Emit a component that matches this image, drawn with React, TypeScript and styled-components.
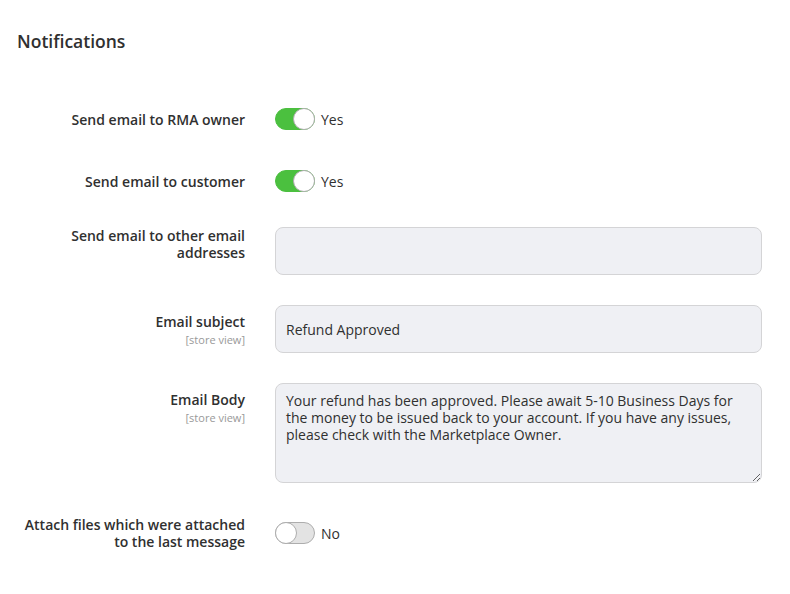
import React, {useState} from "react";
import styled, {createGlobalStyle} from "styled-components";

const GlobalStyle = createGlobalStyle`
    body {
        margin: 0;
        background: #ffffff;
        font-family: "Open Sans", "Liberation Sans", sans-serif;
        color: #303030;
    }
`;

const Wrapper = styled.main`
    width: 790px;
    padding: 30px 28px 40px 17px;
    box-sizing: border-box;
`;

const Heading = styled.h2`
    margin: 0 0 51px 0;
    font-size: 17.5px;
    line-height: 22px;
    font-weight: 600;
    color: #303030;
`;

const Fields = styled.div`
    display: flex;
    flex-direction: column;
    gap: 30px;
`;

const Row = styled.div<{ $center?: boolean; $minHeight?: number }>`
    display: flex;
    align-items: ${p => (p.$center ? "center" : "flex-start")};
    gap: 30px;
    min-height: ${p => p.$minHeight ?? 0}px;
`;

const LabelCol = styled.div<{ $top?: number }>`
    width: 228px;
    flex-shrink: 0;
    text-align: right;
    padding-top: ${p => p.$top ?? 0}px;
`;

const Label = styled.label`
    display: block;
    font-size: 14px;
    line-height: 17px;
    font-weight: 600;
    color: #303030;
`;

const Scope = styled.div`
    font-size: 11px;
    line-height: 14px;
    margin-top: 3px;
    color: #999999;
`;

const Control = styled.div`
    flex: 1;
    display: flex;
    align-items: center;
    gap: 6px;
`;

const Track = styled.button<{ $on: boolean }>`
    position: relative;
    width: 40px;
    height: 22px;
    padding: 0;
    border-radius: 11px;
    border: 1px solid ${p => (p.$on ? "#4bbf3f" : "#adadad")};
    background: ${p => (p.$on ? "#4bc03f" : "#e3e3e3")};
    cursor: pointer;
    box-sizing: border-box;
`;

const Knob = styled.span<{ $on: boolean }>`
    position: absolute;
    top: -1px;
    left: ${p => (p.$on ? "17px" : "-1px")};
    width: 22px;
    height: 22px;
    border-radius: 50%;
    background: #ffffff;
    border: 1px solid #adadad;
    box-sizing: border-box;
`;

const ToggleText = styled.span`
    font-size: 14px;
    color: #303030;
`;

const TextInput = styled.input`
    width: 100%;
    height: 48px;
    box-sizing: border-box;
    padding: 0 10px;
    border: 1px solid #d4d4d6;
    border-radius: 8px;
    background: #eff0f4;
    font-family: "Open Sans", "Liberation Sans", sans-serif;
    font-size: 14px;
    color: #303030;
    outline: none;
`;

const TextArea = styled.textarea`
    width: 100%;
    height: 100px;
    box-sizing: border-box;
    padding: 8px 10px;
    border: 1px solid #d4d4d6;
    border-radius: 8px;
    background: #eff0f4;
    font-family: "Open Sans", "Liberation Sans", sans-serif;
    font-size: 14px;
    line-height: 17px;
    color: #303030;
    outline: none;
    display: block;
`;

const Toggle = ({initial}: { initial: boolean }) => {
    const [on, setOn] = useState(initial);
    return (
        <Control>
            <Track $on={on} onClick={() => setOn(v => !v)}>
                <Knob $on={on} />
            </Track>
            <ToggleText>{on ? "Yes" : "No"}</ToggleText>
        </Control>
    );
};

export default function App() {
    return (
        <>
            <GlobalStyle />
            <Wrapper>
                <Heading>Notifications</Heading>
                <Fields>
                    <Row $center $minHeight={32}>
                        <LabelCol><Label>Send email to RMA owner</Label></LabelCol>
                        <Toggle initial={true} />
                    </Row>
                    <Row $center $minHeight={32}>
                        <LabelCol><Label>Send email to customer</Label></LabelCol>
                        <Toggle initial={true} />
                    </Row>
                    <Row>
                        <LabelCol><Label>Send email to other email addresses</Label></LabelCol>
                        <Control><TextInput defaultValue="" /></Control>
                    </Row>
                    <Row>
                        <LabelCol $top={8}>
                            <Label>Email subject</Label>
                            <Scope>[store view]</Scope>
                        </LabelCol>
                        <Control><TextInput defaultValue="Refund Approved" /></Control>
                    </Row>
                    <Row>
                        <LabelCol $top={8}>
                            <Label>Email Body</Label>
                            <Scope>[store view]</Scope>
                        </LabelCol>
                        <Control>
                            <TextArea defaultValue="Your refund has been approved. Please await 5-10 Business Days for the money to be issued back to your account. If you have any issues, please check with the Marketplace Owner." />
                        </Control>
                    </Row>
                    <Row $center $minHeight={40}>
                        <LabelCol><Label>Attach files which were attached to the last message</Label></LabelCol>
                        <Toggle initial={false} />
                    </Row>
                </Fields>
            </Wrapper>
        </>
    );
}
